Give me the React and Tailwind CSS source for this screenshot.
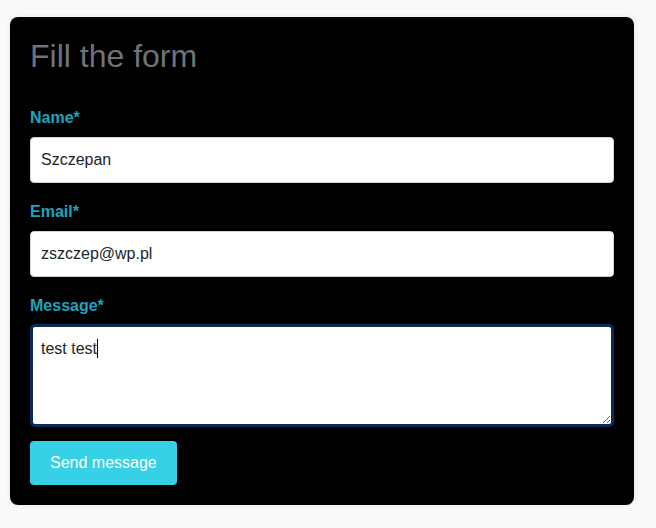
import React from "react";

export default function App() {
  return (
    <div
      className="min-h-[528px] w-[656px] bg-[#f8f9fb] pt-[17px] pl-[10px]"
      style={{ fontFamily: '"Liberation Sans", Arial, sans-serif' }}
    >
      <div className="w-[624px] rounded-[8px] bg-black px-5 pt-5 pb-5 shadow-[0_0_6px_rgba(0,0,0,0.08)]">
        <h1 className="text-[32px] leading-[38px] text-[#6c737a] font-normal">Fill the form</h1>
        <form className="mt-[31px] flex flex-col" onSubmit={(e) => e.preventDefault()}>
          <label className="text-[16px] leading-[24px] font-bold text-[#1ea3bf]">Name*</label>
          <input
            defaultValue="Szczepan"
            className="mt-[7px] h-[46px] w-full rounded-[4px] border border-[#ced4da] bg-white px-[10px] text-[16px] text-[#212529] outline-none"
          />
          <label className="mt-[17px] text-[16px] leading-[24px] font-bold text-[#1ea3bf]">Email*</label>
          <input
            defaultValue="zszczep@wp.pl"
            className="mt-[7px] h-[46px] w-full rounded-[4px] border border-[#ced4da] bg-white px-[10px] text-[16px] text-[#212529] outline-none"
          />
          <label className="mt-[17px] text-[16px] leading-[24px] font-bold text-[#1ea3bf]">Message*</label>
          <div className="relative mt-[6px]">
            <textarea
              defaultValue="test test"
              className="block h-[103px] w-full rounded-[5px] border-[3px] border-[#0b2a5c] bg-white px-[8px] py-[12px] text-[16px] leading-[20px] text-[#212529] outline-none"
            />
            <span className="pointer-events-none absolute left-[67px] top-[15px] h-[19px] w-px bg-black" />
          </div>
          <div className="mt-[14px]">
            <button
              type="submit"
              className="h-[44px] rounded-[4px] bg-[#36d1e7] px-5 text-[16px] leading-[24px] text-white"
            >
              Send message
            </button>
          </div>
        </form>
      </div>
    </div>
  );
}
